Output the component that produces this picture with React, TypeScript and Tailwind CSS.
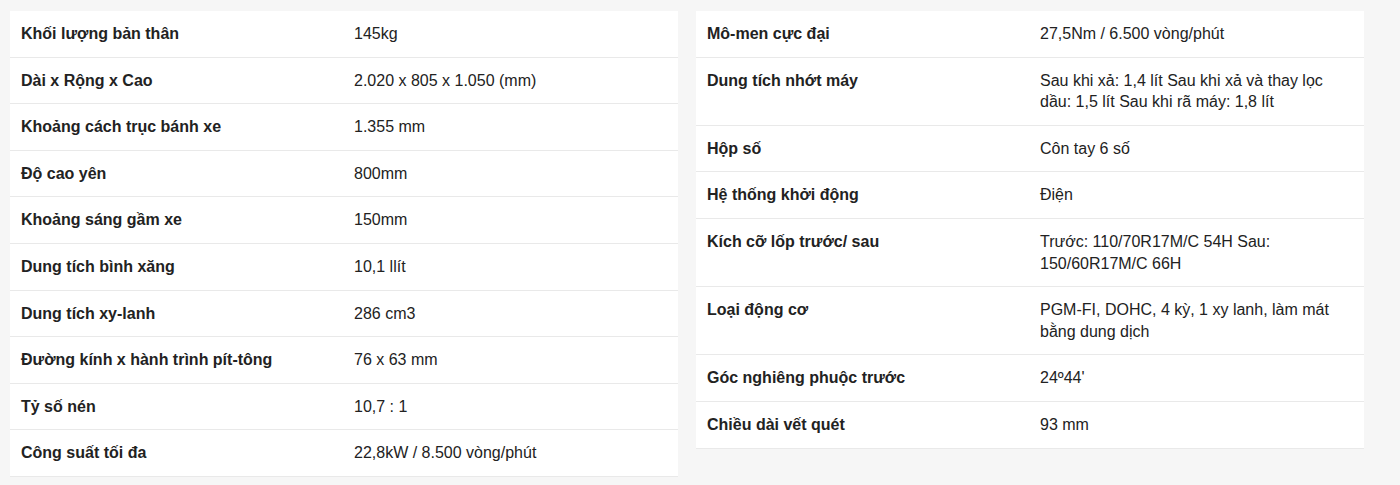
const LEFT: [string, string][] = [
  ["Khối lượng bản thân", "145kg"],
  ["Dài x Rộng x Cao", "2.020 x 805 x 1.050 (mm)"],
  ["Khoảng cách trục bánh xe", "1.355 mm"],
  ["Độ cao yên", "800mm"],
  ["Khoảng sáng gầm xe", "150mm"],
  ["Dung tích bình xăng", "10,1 llít"],
  ["Dung tích xy-lanh", "286 cm3"],
  ["Đường kính x hành trình pít-tông", "76 x 63 mm"],
  ["Tỷ số nén", "10,7 : 1"],
  ["Công suất tối đa", "22,8kW / 8.500 vòng/phút"],
];

const RIGHT: [string, string][] = [
  ["Mô-men cực đại", "27,5Nm / 6.500 vòng/phút"],
  ["Dung tích nhớt máy", "Sau khi xả: 1,4 lít Sau khi xả và thay lọc dầu: 1,5 lít Sau khi rã máy: 1,8 lít"],
  ["Hộp số", "Côn tay 6 số"],
  ["Hệ thống khởi động", "Điện"],
  ["Kích cỡ lốp trước/ sau", "Trước: 110/70R17M/C 54H Sau: 150/60R17M/C 66H"],
  ["Loại động cơ", "PGM-FI, DOHC, 4 kỳ, 1 xy lanh, làm mát bằng dung dịch"],
  ["Góc nghiêng phuộc trước", "24º44'"],
  ["Chiều dài vết quét", "93 mm"],
];

const SpecTable = ({ rows }: { rows: [string, string][] }) => (
  <div className="w-[668px] bg-white self-start">
    {rows.map(([label, value]) => (
      <div
        key={label}
        className="grid grid-cols-2 border-b border-[#e9e9e9] text-[16px] leading-[21.6px] text-[#222]"
      >
        <div className="pl-[11px] pr-3 py-3 font-bold">{label}</div>
        <div className="pl-[10px] pr-3 py-3">{value}</div>
      </div>
    ))}
  </div>
);

export default function App() {
  return (
    <div
      className="w-[1400px] h-[485px] bg-[#f6f6f6] pl-[10px] pt-[11px] flex gap-[18px] items-start"
      style={{ fontFamily: '"Liberation Sans", Arial, sans-serif' }}
    >
      <SpecTable rows={LEFT} />
      <SpecTable rows={RIGHT} />
    </div>
  );
}
